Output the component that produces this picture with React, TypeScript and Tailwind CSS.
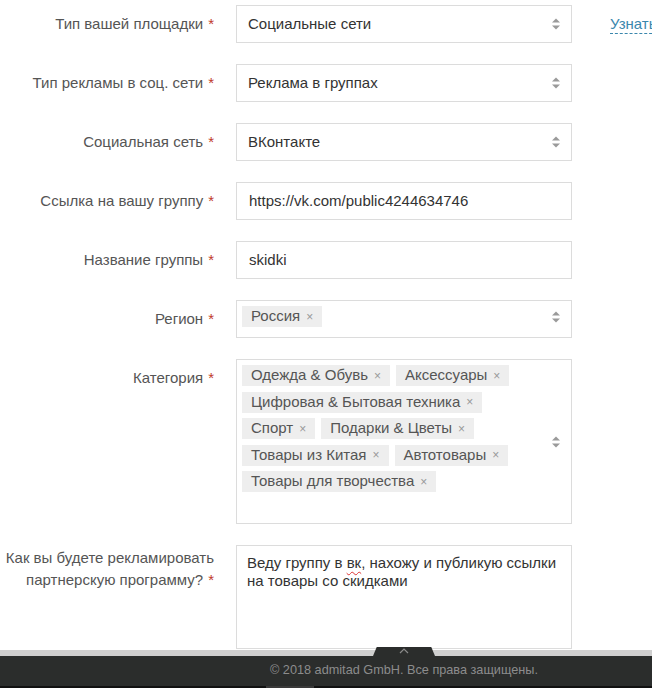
import type { ReactNode } from 'react'

const font = { fontFamily: '"Liberation Sans", Arial, sans-serif' }

function Arrows() {
  return (
    <svg width="10" height="14" viewBox="0 0 10 14" className="shrink-0">
      <path d="M5 1.5 L9 5.5 L1 5.5 Z" fill="#9a9a9a" />
      <path d="M5 12.5 L9 8.5 L1 8.5 Z" fill="#9a9a9a" />
    </svg>
  )
}

function Label({ children, className = '' }: { children: ReactNode; className?: string }) {
  return (
    <div className={`w-[214px] shrink-0 text-right text-[15px] leading-[22px] text-[#555] ${className}`}>
      {children}
      <span className="ml-[5px] text-[#c0392b]">*</span>
    </div>
  )
}

function Tag({ text }: { text: string }) {
  return (
    <span className="flex h-[21px] items-center gap-[6px] bg-[#eeeeee] px-[9px] text-[15px] text-[#555]">
      {text}
      <span className="text-[12px] text-[#999]">×</span>
    </span>
  )
}

function Select({ value }: { value: string }) {
  return (
    <div className="flex h-[38px] w-[336px] items-center justify-between border border-[#dcdcdc] pl-[11px] pr-[10px] text-[15px] text-[#333]">
      <span>{value}</span>
      <Arrows />
    </div>
  )
}

function Input({ value }: { value: string }) {
  return (
    <div className="flex h-[38px] w-[336px] items-center border border-[#dcdcdc] pl-[12px] text-[15px] text-[#333]">
      {value}
    </div>
  )
}

const categories = [
  'Одежда & Обувь',
  'Аксессуары',
  'Цифровая & Бытовая техника',
  'Спорт',
  'Подарки & Цветы',
  'Товары из Китая',
  'Автотовары',
  'Товары для творчества',
]

export default function App() {
  return (
    <div className="flex h-[688px] w-[652px] flex-col overflow-hidden bg-white" style={font}>
      <div className="flex flex-1 flex-col gap-[21px] pt-[5px]">
        <div className="flex items-start">
          <Label className="pt-[8px]">Тип вашей площадки</Label>
          <div className="ml-[22px]">
            <Select value="Социальные сети" />
          </div>
          <a className="ml-[38px] mt-[10px] whitespace-nowrap border-b border-dashed border-[#3a87ad] text-[15px] leading-[18px] text-[#3a87ad]">
            Узнать
          </a>
        </div>
        <div className="flex items-start">
          <Label className="pt-[8px]">Тип рекламы в соц. сети</Label>
          <div className="ml-[22px]">
            <Select value="Реклама в группах" />
          </div>
        </div>
        <div className="flex items-start">
          <Label className="pt-[8px]">Социальная сеть</Label>
          <div className="ml-[22px]">
            <Select value="ВКонтакте" />
          </div>
        </div>
        <div className="flex items-start">
          <Label className="pt-[8px]">Ссылка на вашу группу</Label>
          <div className="ml-[22px]">
            <Input value="https://vk.com/public4244634746" />
          </div>
        </div>
        <div className="flex items-start">
          <Label className="pt-[8px]">Название группы</Label>
          <div className="ml-[22px]">
            <Input value="skidki" />
          </div>
        </div>
        <div className="flex items-start">
          <Label className="pt-[8px]">Регион</Label>
          <div className="ml-[22px] flex h-[38px] w-[336px] items-start justify-between border border-[#dcdcdc] pl-[5px] pr-[10px] pt-[5px]">
            <Tag text="Россия" />
            <div className="mt-[4px]">
              <Arrows />
            </div>
          </div>
        </div>
        <div className="flex items-start">
          <Label className="pt-[8px]">Категория</Label>
          <div className="ml-[22px] flex h-[165px] w-[336px] items-center justify-between border border-[#dcdcdc] pr-[10px]">
            <div className="flex w-[280px] flex-wrap content-start gap-x-[6px] gap-y-[5.5px] self-start pl-[5px] pt-[5px]">
              {categories.map((c) => (
                <Tag key={c} text={c} />
              ))}
            </div>
            <Arrows />
          </div>
        </div>
        <div className="flex items-start">
          <Label className="pt-[2px]">
            Как вы будете рекламировать
            <br />
            партнерскую программу?
          </Label>
          <div className="ml-[22px] h-[104px] w-[336px] border border-[#dcdcdc] px-[10px] pt-[8px] text-[15px] leading-[18px] text-[#333]">
            Веду группу в{' '}
            <span className="underline decoration-[#d33] decoration-wavy decoration-1 underline-offset-[3px]">вк</span>,
            нахожу и публикую ссылки на товары со скидками
          </div>
        </div>
      </div>
      <div className="relative flex flex-col">
        <div className="absolute left-[373px] top-[-3px] flex h-[9px] w-[62px] items-start justify-center bg-[#2b2d2c] [clip-path:polygon(6%_0,94%_0,100%_100%,0_100%)]">
          <svg width="10" height="6" viewBox="0 0 10 6" className="mt-[1px]">
            <path d="M1 5 L5 1 L9 5" stroke="#8a8a8a" strokeWidth="1.2" fill="none" />
          </svg>
        </div>
        <div className="h-[6px] bg-[#cfcfcf]" />
        <div className="flex h-[30px] items-center bg-[#2b2d2c] pl-[270px] text-[12.7px] text-[#8c8c8c]">
          © 2018 admitad GmbH. Все права защищены.
        </div>
        <div className="flex h-[2px] bg-[#111]">
          <div className="ml-[266px] w-[48px] bg-[#3a3a3a]" />
        </div>
      </div>
    </div>
  )
}
